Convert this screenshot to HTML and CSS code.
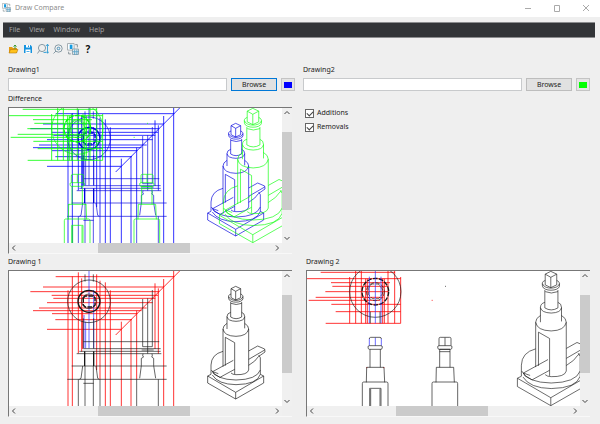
FILE: index.html
```html
<!DOCTYPE html>
<html lang="en">
<head>
<meta charset="utf-8">
<title>Draw Compare</title>
<link rel="stylesheet" href="styles.css">
</head>
<body>
<svg class="defs" aria-hidden="true">
  <defs>
    <g id="arrow-up"><path d="M2.5 6 5 3.5 7.5 6"/></g>
    <g id="arrow-down"><path d="M2.5 4 5 6.5 7.5 4"/></g>
    <g id="arrow-left"><path d="M6 2.5 3.5 5 6 7.5"/></g>
    <g id="arrow-right"><path d="M4 2.5 6.5 5 4 7.5"/></g>
    <g id="compare">
      <path d="M.5.5h6v6h-6z" fill="#fff" stroke="#9aa3a8" stroke-width=".8"/>
      <path d="M2.500 1.500H5v4H2.500z" fill="#159be0"/>
      <path d="M7.500 1.500h2V4M1.500 8v2h2" fill="none" stroke="#7d8a91" stroke-width=".8"/>
      <path d="M5 5.500h5.500v5H5z" fill="#e3ecf0" stroke="#8c9ba3" stroke-width=".8"/>
      <path d="M5 8h6M7 6v5M9 6v5" fill="none" stroke="#5aa3c8" stroke-width=".8"/>
    </g>
    <g id="bottle">
      <path d="M243 101 257 94 272 101V128L257 135 243 128ZM243 101 257 109 272 101M257 109V135"/>
      <path d="M243 117C236 119 235 122 236 131C238 145 277 145 279 131C279 122 278 119 272 117M236 125C240 140 275 140 279 125"/>
      <path d="M243 145Q258 152 275 145"/>
      <path d="M242 141V186Q258 196 275 186V141"/>
      <path d="M242 172Q231 175 231 185Q233 198 258 199Q283 198 284 185Q284 175 275 172M231 185V222M284 185V220"/>
      <path d="M231 205Q219 212 219 222Q222 243 258 244Q292 243 296 222Q296 212 284 205M219 222V335M296 222V345Q292 360 258 359Q248 359 243 354"/>
      <path d="M226 332V247L254 263V357"/>
      <path d="M219 289Q184 298 183 330V358M184 345Q198 374 258 375Q320 374 331 345M187 360Q204 388 258 389Q322 388 331 358V308L326 300"/>
      <path d="M250 316 188 350 192 357 210 367 254 343M188 350 205 356M296 288 323 273 344 282 345 291 325 305Q318 318 296 331M296 313 344 285"/>
      <path d="M183 358 173 363V384L257 432 341 384V363L331 358M173 363 257 412 341 363M257 412V432"/>
    </g>
    <g id="elevation">
      <path d="M204 276Q204 272 208 272H243Q247 272 247 276Q247 283 243 283H208Q204 283 204 276M210 283V337M241 283V337M200 337H252M200 337 199 382M252 337 254 382M187 460V386Q187 381 191 381H260Q264 381 264 386V460"/>
    </g>
    <g id="drawing-a" class="lines">
      <g class="guide">
        <path d="M167 65H523M129 96H492M91 110H478M155 121H474M160 130H466M141 143H458M117 159H440M99 167H425M156 176H412M166 194H396M141 223H364M347 240 540 47"/>
        <path d="M204 106V455M217 64V455M235 52V295M245 70V290M248 165V282M290 58V345M300 77V373M316 82V455M331 106V455M364 200V455M393 193V455M410 167V373M465 85V282M475 100V296M491 72V455M521 47V455"/>
      </g>
      <path class="centre" d="M267 47V280M252 180V280M257 200V280M281 105V280"/>
      <circle cx="267" cy="139" r="64"/>
      <circle class="bold" cx="267" cy="139" r="33"/>
      <circle cx="267" cy="139" r="22"/>
      <path class="bold dash" d="M250 129 256 123H279L285 129V150L279 156H256L250 150Z"/>
      <path d="M255 58V80M280 58V80M250 260H478M250 281H482M238 289H482M230 296H484M215 333H500M202 373H500M250 385H281"/>
      <path d="M250 190V280M281 190V281M248 333 243 370 238 373M288 333 293 370 298 373M235 373V455M300 373V455M255 333V455M280 333V455"/>
      <path class="bold" d="M254 289V333M281 289V333"/>
      <path d="M428 132V275M443 130V296M457 105V275M428 275H457M425 285H461M429 296 428 303 431 306 424 310V332L419 370M456 296 457 303 455 306 461 310V332L467 370M410 373V455M475 373V455"/>
      <use href="#bottle" x="450"/>
    </g>
    <g id="drawing-b" class="lines">
      <g class="guide">
        <path d="M62 52H285M18 71H302M93 83H270M97 94H265M76 110H265M47 127H250M26 136H240M94 148H302M107 170H302M77 205H302"/>
        <path d="M149 66V205M167 47V205M184 47V205M197 71V205M202 71V205M248 71V205M253 71V205M264 47V205M284 47V205M302 66V205M199 338h3M250 338h3M395 136h3"/>
      </g>
      <circle cx="226" cy="110" r="77"/>
      <circle class="bold dash" cx="226" cy="110" r="40"/>
      <circle class="dash" cx="226" cy="110" r="27"/>
      <path class="dash" d="M210 91 217 87H235L247 102V117L236 131H217L205 118V101Z"/>
      <path class="centre" d="M208 65V205M226 47V205M243 65V205M208 272V251M226 248V272M244 251V272"/>
      <path d="M211 170V205M240 170V205M208 252Q208 247 212 247H240Q244 247 244 252M209 460V400H243V460M212 402V460M240 402V460"/>
      <use href="#elevation"/>
      <use href="#elevation" x="209"/>
      <path d="M417 272V251Q417 247 421 247H449Q453 247 453 251V272M435 248V272M419 283H450M419 290H450M435 94h3"/>
      <use class="enlarged" href="#bottle" transform="translate(446 -63) scale(1.192)"/>
    </g>
  </defs>
</svg>

<header class="titlebar">
  <svg class="app-icon" viewBox="0 0 11 11"><use href="#compare"/></svg>
  <h1>Draw Compare</h1>
  <div class="window-buttons">
    <button type="button" aria-label="Minimize"><svg viewBox="0 0 8 8"><path d="M1 4.500h6"/></svg></button>
    <button type="button" aria-label="Maximize"><svg viewBox="0 0 8 8"><path d="M1.500 1.500h5v6h-5z"/></svg></button>
    <button type="button" aria-label="Close"><svg viewBox="0 0 8 8"><path d="m1 1 6 6M7 1 1 7"/></svg></button>
  </div>
</header>

<nav class="menubar">
  <button type="button">File</button>
  <button type="button">View</button>
  <button type="button">Window</button>
  <button type="button">Help</button>
</nav>

<div class="toolbar">
  <button type="button" aria-label="Open"><svg viewBox="0 0 12 12"><path d="M2 10V4h3l1 1h4v5z" fill="#e69a10"/><path d="M2 10 3.500 6.500H11L9.500 10z" fill="#ffc21c" stroke="#b7780d" stroke-width=".6"/><path d="M8 6V2M6.500 3.500 8 2l1.500 1.500" fill="none" stroke="#3f9b36"/></svg></button>
  <button type="button" aria-label="Save"><svg viewBox="0 0 12 12"><path d="M2 2h6.500L10 3.500V10H2z" fill="#1593df"/><path d="M4 2h4v2.500H4zM3.500 6.500h5V10h-5z" fill="#fff"/><path d="M6 2.500h1V4H6zM4.500 8h3v.8h-3z" fill="#1593df"/></svg></button>
  <button type="button" aria-label="Zoom extents"><svg viewBox="0 0 12 12"><g fill="none" stroke="#6f8793" stroke-width=".8"><circle cx="5" cy="5" r="3.600"/><path d="M2.500 7.500.5 10.500"/><path stroke="#1d94d2" d="M10.500 1.500v8.500M9 3l1.500-1.800L12 3M9 8.500l1.500 1.800L12 8.500M6.500 9.500H9"/></g></svg></button>
  <button type="button" aria-label="Zoom window"><svg viewBox="0 0 12 12"><g fill="none" stroke="#6f8793" stroke-width=".8"><circle cx="6.500" cy="5.500" r="3.700"/><path d="M4 8 1.500 10.500"/><circle cx="6.500" cy="5.500" r="1.300" stroke="#2b7fae"/></g></svg></button>
  <button type="button" aria-label="Compare"><svg viewBox="0 0 11 11"><use href="#compare"/></svg></button>
  <button type="button" class="help" aria-label="Help">?</button>
</div>

<main class="workspace">
  <section class="picker">
    <label for="file1">Drawing1</label>
    <div class="picker-row">
      <input type="text" id="file1">
      <button type="button" class="browse focused">Browse</button>
      <button type="button" class="swatch blue" aria-label="Drawing1 colour"><span></span></button>
    </div>
  </section>
  <section class="picker">
    <label for="file2">Drawing2</label>
    <div class="picker-row">
      <input type="text" id="file2">
      <button type="button" class="browse">Browse</button>
      <button type="button" class="swatch green" aria-label="Drawing2 colour"><span></span></button>
    </div>
  </section>

  <section class="view start">
    <h2>Difference</h2>
    <div class="frame">
      <svg class="canvas" viewBox="27 48 819 405">
        <use class="only-blue" href="#drawing-a"/>
        <use class="only-green" href="#drawing-b" x="6"/>
      </svg>
      <div class="scroll vertical"><button type="button" aria-label="Up"><svg viewBox="0 0 10 10"><use href="#arrow-up"/></svg></button><div class="thumb"></div><button type="button" aria-label="Down"><svg viewBox="0 0 10 10"><use href="#arrow-down"/></svg></button></div>
      <div class="scroll horizontal"><button type="button" aria-label="Left"><svg viewBox="0 0 10 10"><use href="#arrow-left"/></svg></button><div class="thumb"></div><button type="button" aria-label="Right"><svg viewBox="0 0 10 10"><use href="#arrow-right"/></svg></button></div>
    </div>
  </section>
  <section class="options">
    <label><input type="checkbox" checked>Additions</label>
    <label><input type="checkbox" checked>Removals</label>
  </section>

  <section class="view start">
    <h2>Drawing 1</h2>
    <div class="frame">
      <svg class="canvas" viewBox="27 48 819 405"><use href="#drawing-a"/></svg>
      <div class="scroll vertical"><button type="button" aria-label="Up"><svg viewBox="0 0 10 10"><use href="#arrow-up"/></svg></button><div class="thumb"></div><button type="button" aria-label="Down"><svg viewBox="0 0 10 10"><use href="#arrow-down"/></svg></button></div>
      <div class="scroll horizontal"><button type="button" aria-label="Left"><svg viewBox="0 0 10 10"><use href="#arrow-left"/></svg></button><div class="thumb"></div><button type="button" aria-label="Right"><svg viewBox="0 0 10 10"><use href="#arrow-right"/></svg></button></div>
    </div>
  </section>
  <section class="view end">
    <h2>Drawing 2</h2>
    <div class="frame">
      <svg class="canvas" viewBox="21 48 819 405"><use href="#drawing-b"/></svg>
      <div class="scroll vertical"><button type="button" aria-label="Up"><svg viewBox="0 0 10 10"><use href="#arrow-up"/></svg></button><div class="thumb"></div><button type="button" aria-label="Down"><svg viewBox="0 0 10 10"><use href="#arrow-down"/></svg></button></div>
      <div class="scroll horizontal"><button type="button" aria-label="Left"><svg viewBox="0 0 10 10"><use href="#arrow-left"/></svg></button><div class="thumb"></div><button type="button" aria-label="Right"><svg viewBox="0 0 10 10"><use href="#arrow-right"/></svg></button></div>
    </div>
  </section>
</main>
</body>
</html>
```
FILE: styles.css
```css
* { box-sizing: border-box; }

body {
  margin: 0;
  min-height: 100vh;
  background: #efefef;
  color: #1c1c1c;
  font: 7px/12px "Noto Sans", "Open Sans", sans-serif;
}

h1, h2 { margin: 0; font-size: inherit; font-weight: 400; }
button, input { font: inherit; color: inherit; margin: 0; padding: 0; border: 0; background: none; }
svg { display: block; }
.defs { position: absolute; width: 0; height: 0; }

.titlebar {
  display: flex;
  align-items: center;
  gap: 4px;
  height: 17px;
  padding: 0 10px 2px 2px;
  background: #fff;
  color: #8c8c8c;
}
.app-icon { width: 9px; height: 9px; }
.window-buttons { display: flex; gap: 21px; margin-left: auto; }
.window-buttons svg { width: 8px; height: 8px; fill: none; stroke: #aaa; }

.menubar {
  display: flex;
  gap: 9px;
  height: 16px;
  margin: 5px 5px 0 3px;
  padding: 0 6px;
  background: #323437;
  border: solid #8b8c8e;
  border-width: 1px 0;
  color: #a3a3a3;
}

.toolbar { display: flex; align-items: center; gap: 3px; height: 22px; padding: 0 7px; }
.toolbar button { width: 12px; height: 12px; }
.toolbar svg { width: 12px; height: 12px; }
.toolbar .help { font-size: 10px; font-weight: 700; color: #111; }

.workspace {
  display: grid;
  grid-template-columns: 1fr 1fr;
  column-gap: 8px;
  row-gap: 2px;
  padding: 4px 10px 8px 8px;
}

.picker label { display: block; height: 14px; }
.picker-row { display: flex; gap: 4px; height: 13px; }
.picker-row input { flex: 1; min-width: 0; background: #fff; border: 1px solid #c8cacc; }
.browse { width: 46px; line-height: 11px; background: #e1e1e1; border: 1px solid #bdbdbd; }
.browse.focused { border-color: #0078d7; }
.swatch { display: flex; align-items: center; justify-content: center; width: 14px; background: #e4e4e4; border: 1px solid #c4c4c4; }
.swatch span { width: 8px; height: 6px; }
.blue span { background: #00f; }
.green span { background: #0f0; }

.view h2 { height: 14px; }
.view.start { padding-right: 3px; }
.view.end { padding-left: 3px; }
.frame {
  display: grid;
  grid-template-columns: 1fr 10px;
  grid-template-rows: auto 10px;
  border-top: 1px solid #777;
  border-left: 1px solid #777;
  border-bottom: 1px solid #f8f8f8;
}
.canvas { width: 100%; height: auto; background: #fff; overflow: hidden; }

.scroll { display: grid; background: #f0f0f0; }
.vertical { grid-template-rows: 10px 14fr 78fr 23fr 10px; }
.vertical .thumb { grid-row: 3; }
.vertical button:last-child { grid-row: 5; }
.horizontal { grid-template-columns: 10px 79fr 92fr 82fr 10px; }
.horizontal .thumb { grid-column: 3; }
.horizontal button:last-child { grid-column: 5; }
.scroll svg { width: 10px; height: 10px; fill: none; stroke: #444; }
.thumb { background: #cbcbcb; }

.options { display: flex; flex-direction: column; gap: 2px; padding: 14px 2px; }
.options label { display: flex; align-items: center; gap: 3px; }
.options input {
  appearance: none;
  display: grid;
  place-items: center;
  width: 9px;
  height: 9px;
  background: #fff;
  border: 1px solid #666;
}
.options input:checked::before {
  content: "";
  width: 5px;
  height: 3px;
  border: solid #444;
  border-width: 0 0 1px 1px;
  transform: rotate(-45deg);
}

/* Drawing layers: each view picks its line colours through these variables. */
.canvas { --ink: #181818; --guide: #f00; --centre: #22f; }
.only-blue { --ink: #00d; --guide: #00f; --centre: #00d; }
.only-green { --ink: #0f0; --guide: #0f0; --centre: #0d0; }
.lines { fill: none; stroke: var(--ink); stroke-width: 2; }
.guide { stroke: var(--guide); stroke-width: 2.4; }
.centre { stroke: var(--centre); }
.bold { stroke-width: 4; }
.dash { stroke-dasharray: 14 4; }
.enlarged { stroke-width: 1.6; }
```
